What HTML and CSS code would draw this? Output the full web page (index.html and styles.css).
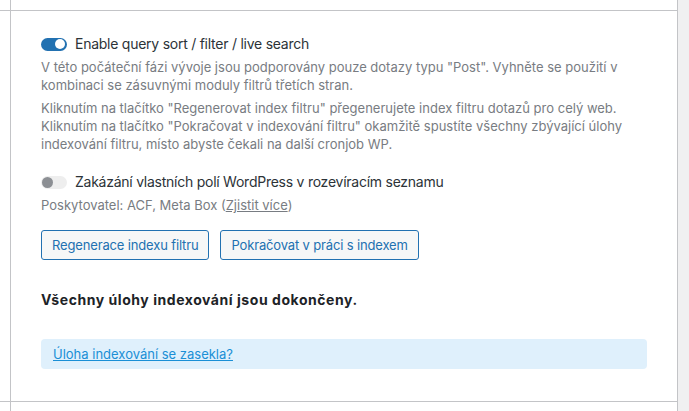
FILE: index.html
```html
<!DOCTYPE html>
<html lang="cs">
<head>
    <meta charset="UTF-8">
    <meta name="viewport" content="width=device-width, initial-scale=1.0">
    <title>Nastavení filtru</title>
    <link rel="stylesheet" href="styles.css">
</head>
<body>

    <div class="page">
        <div class="grid">
            <div class="corner top"></div>
            <div class="cell top"></div>

            <div class="corner mid"></div>
            <div class="cell panel">

                <label class="toggle-row">
                    <span class="toggle on"><span class="knob"></span></span>
                    <span class="toggle-label">Enable query sort / filter / live search</span>
                </label>
                <p class="description">V této počáteční fázi vývoje jsou podporovány pouze dotazy typu "Post". Vyhněte se použití v<br>kombinaci se zásuvnými moduly filtrů třetích stran.</p>
                <p class="description">Kliknutím na tlačítko "Regenerovat index filtru" přegenerujete index filtru dotazů pro celý web.<br>Kliknutím na tlačítko "Pokračovat v indexování filtru" okamžitě spustíte všechny zbývající úlohy<br>indexování filtru, místo abyste čekali na další cronjob WP.</p>

                <label class="toggle-row second">
                    <span class="toggle"><span class="knob"></span></span>
                    <span class="toggle-label">Zakázání vlastních polí WordPress v rozevíracím seznamu</span>
                </label>
                <p class="description">Poskytovatel: ACF, Meta Box (<a href="#" class="muted-link">Zjistit více</a>)</p>

                <div class="buttons">
                    <button class="button">Regenerace indexu filtru</button>
                    <button class="button">Pokračovat v práci s indexem</button>
                </div>

                <p class="status">Všechny úlohy indexování jsou dokončeny.</p>

                <div class="notice">
                    <a href="#">Úloha indexování se zasekla?</a>
                </div>

            </div>

            <div class="corner bottom"></div>
            <div class="cell bottom"></div>
        </div>
        <div class="sidebar"></div>
    </div>

</body>
</html>
```

FILE: styles.css
```css
/* Base */
:root {
    --color-border: #c3c4c7;
    --color-text: #1d2327;
    --color-label: #2c3338;
    --color-muted: #787c82;
    --color-primary: #2271b1;
    --color-button-bg: #f6f7f7;
    --color-notice: #dff0fc;
    --color-link: #1a8fd6;
    --color-side: #f0f0f1;
}

* {
    margin: 0;
    padding: 0;
    box-sizing: border-box;
}

body {
    font-family: Inter, "Noto Sans", sans-serif;
    color: var(--color-text);
    background: #ffffff;
    font-size: 13px;
    line-height: 18px;
}

.page {
    display: flex;
    height: 411px;
}

.grid {
    width: 678px;
    display: grid;
    grid-template-columns: 10px 1fr;
    grid-template-rows: 11px auto 1fr;
    border-right: 1px solid var(--color-border);
}

.sidebar {
    flex: 1;
    background: var(--color-side);
}

.corner.top,
.corner.mid,
.cell.top {
    border-bottom: 1px solid var(--color-border);
}

.cell {
    border-left: 1px solid var(--color-border);
}

.cell.panel {
    border-bottom: 1px solid var(--color-border);
    height: 391px;
    padding: 23px 30px 0 30px;
}

/* Toggles */
.toggle-row {
    display: flex;
    align-items: center;
    gap: 8px;
    font-size: 14px;
    line-height: 20px;
    letter-spacing: -0.25px;
    color: var(--color-label);
}

.toggle {
    width: 26px;
    height: 13px;
    border-radius: 7px;
    background: #eeeeee;
    display: flex;
    align-items: center;
    padding: 0 2px;
}

.toggle .knob {
    width: 11px;
    height: 11px;
    border-radius: 50%;
    background: #8c8f94;
    margin-left: -1px;
}

.toggle.on {
    background: var(--color-primary);
    justify-content: flex-end;
}

.toggle.on .knob {
    background: #ffffff;
    width: 10px;
    height: 10px;
    margin-left: 0;
}

.toggle-row.second {
    margin-top: 19px;
}

.description {
    color: var(--color-muted);
    margin-top: 5px;
}

.toggle-row + .description {
    margin-top: 4px;
}

.muted-link {
    color: var(--color-muted);
}

/* Buttons */
.buttons {
    display: flex;
    gap: 11px;
    margin-top: 16px;
}

.button {
    font-family: inherit;
    font-size: 13px;
    line-height: 18px;
    letter-spacing: -0.15px;
    color: var(--color-primary);
    background: var(--color-button-bg);
    border: 1px solid var(--color-primary);
    border-radius: 3px;
    padding: 5px 10px;
    cursor: pointer;
}

.status {
    font-size: 14px;
    font-weight: 700;
    line-height: 20px;
    letter-spacing: 0.55px;
    margin-top: 30px;
}

.notice {
    margin-top: 29px;
    background: var(--color-notice);
    border-radius: 4px;
    padding: 6px 12px;
    font-size: 13px;
}

.notice a {
    color: var(--color-link);
}
```
